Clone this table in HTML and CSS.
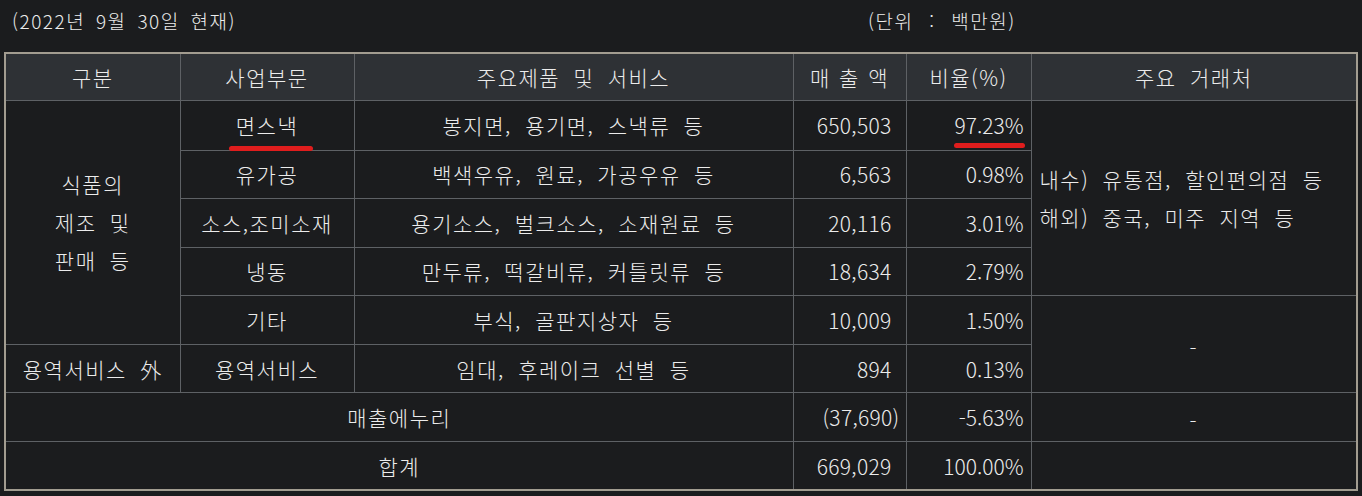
FILE: index.html
```html
<!DOCTYPE html>
<html lang="ko">
<head>
<meta charset="utf-8">
<link rel="stylesheet" href="styles.css">
</head>
<body>
<div class="page">
  <div class="caption">
    <span class="asof">(2022년 9월 30일 현재)</span>
    <span class="unit">(단위 : 백만원)</span>
  </div>
  <table class="sales">
    <colgroup>
      <col class="c1"><col class="c2"><col class="c3"><col class="c4"><col class="c5"><col class="c6">
    </colgroup>
    <thead>
      <tr>
        <th>구분</th>
        <th>사업부문</th>
        <th>주요제품 및 서비스</th>
        <th class="tight">매 출 액</th>
        <th>비율(%)</th>
        <th>주요 거래처</th>
      </tr>
    </thead>
    <tbody>
      <tr class="first">
        <td rowspan="5" class="multi">식품의<br>제조 및<br>판매 등</td>
        <td class="mark-cell">면스낵<span class="mark mark-a"></span></td>
        <td>봉지면, 용기면, 스낵류 등</td>
        <td class="num">650,503</td>
        <td class="pct mark-cell">97.23%<span class="mark mark-b"></span></td>
        <td rowspan="4" class="multi left">내수) 유통점, 할인편의점 등<br>해외) 중국, 미주 지역 등</td>
      </tr>
      <tr>
        <td>유가공</td>
        <td>백색우유, 원료, 가공우유 등</td>
        <td class="num">6,563</td>
        <td class="pct">0.98%</td>
      </tr>
      <tr>
        <td>소스,조미소재</td>
        <td>용기소스, 벌크소스, 소재원료 등</td>
        <td class="num">20,116</td>
        <td class="pct">3.01%</td>
      </tr>
      <tr>
        <td>냉동</td>
        <td>만두류, 떡갈비류, 커틀릿류 등</td>
        <td class="num">18,634</td>
        <td class="pct">2.79%</td>
      </tr>
      <tr>
        <td>기타</td>
        <td>부식, 골판지상자 등</td>
        <td class="num">10,009</td>
        <td class="pct">1.50%</td>
        <td rowspan="2" class="dash">-</td>
      </tr>
      <tr>
        <td>용역서비스 外</td>
        <td>용역서비스</td>
        <td>임대, 후레이크 선별 등</td>
        <td class="num">894</td>
        <td class="pct">0.13%</td>
      </tr>
      <tr>
        <td colspan="3">매출에누리</td>
        <td class="num neg">(37,690)</td>
        <td class="pct">-5.63%</td>
        <td class="dash">-</td>
      </tr>
      <tr>
        <td colspan="3">합계</td>
        <td class="num">669,029</td>
        <td class="pct">100.00%</td>
        <td></td>
      </tr>
    </tbody>
  </table>
</div>
</body>
</html>
```
FILE: styles.css
```css
html, body {
  margin: 0;
  padding: 0;
  background: #1b1c1e;
}
body {
  color: #ececec;
  font-family: "Noto Sans CJK KR", "Noto Sans", sans-serif;
  font-weight: 300;
}
.page {
  padding: 0 6px 0 4px;
}
.caption {
  display: flex;
  align-items: center;
  height: 52px;
  padding-left: 8px;
  box-sizing: border-box;
  padding-bottom: 12px;
  font-size: 19px;
  letter-spacing: 1.5px;
  word-spacing: 4px;
}
.asof {
  width: 856px;
  flex: none;
}
.unit {
  word-spacing: 9px;
}
.sales {
  width: 1352px;
  border-collapse: collapse;
  table-layout: fixed;
  border: 2px solid #a29c90;
  font-size: 21px;
  letter-spacing: 1.5px;
  word-spacing: 6px;
}
.c1 { width: 175px; }
.c2 { width: 174px; }
.c3 { width: 439px; }
.c4 { width: 113px; }
.c5 { width: 125px; }
.c6 { width: 326px; }
.sales th,
.sales td {
  border: 1px solid #5e6165;
  height: 48.6px;
  padding: 0 6px;
  text-align: center;
  vertical-align: middle;
  font-weight: 300;
  white-space: nowrap;
  box-sizing: border-box;
}
.sales th {
  background: #2e3135;
  height: 47px;
}
.sales th.tight {
  word-spacing: 1px;
}
.sales td {
  background: #1b1c1e;
}
.sales .first td {
  height: 50px;
}
.multi {
  line-height: 38px;
}
.left {
  text-align: left !important;
  padding-left: 8px !important;
}
.num {
  text-align: right !important;
  padding-right: 14px !important;
  font-size: 21px;
  letter-spacing: 0.3px;
}
.num.neg {
  padding-right: 6px !important;
}
.pct {
  text-align: right !important;
  padding-right: 7px !important;
  font-size: 21px;
  letter-spacing: 0;
}
.dash {
  padding-top: 6px !important;
}
.mark-cell {
  position: relative;
}
.mark {
  position: absolute;
  height: 5px;
  background: #e01d1d;
  border-radius: 3px;
}
.mark-a {
  left: 48px;
  top: 45px;
  width: 84px;
}
.mark-b {
  left: 47px;
  top: 42px;
  width: 71px;
}
```
